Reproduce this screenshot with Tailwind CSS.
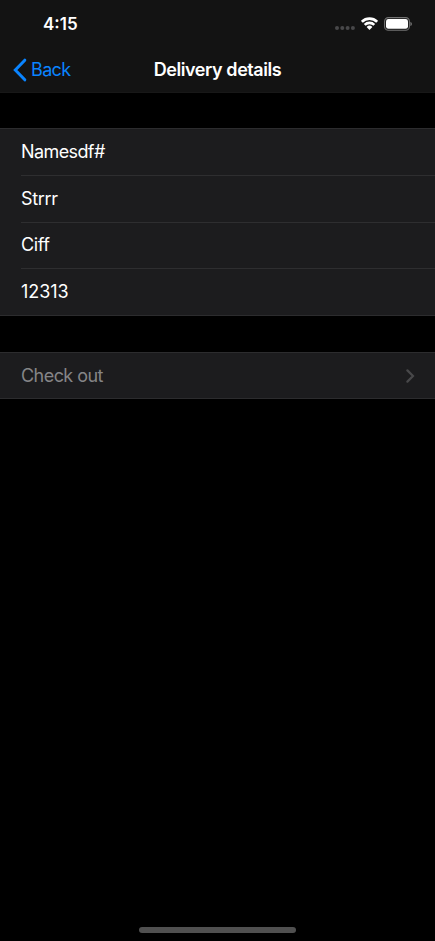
<!DOCTYPE html>
<html lang="en">
<head>
<meta charset="utf-8">
<title>Delivery details</title>
<script src="https://cdn.jsdelivr.net/npm/@tailwindcss/browser@4"></script>
</head>
<body class="bg-black">
<main class="flex h-[941px] w-[435px] flex-col overflow-hidden bg-black font-['Inter',sans-serif] text-[18px] leading-[22px] text-white">
  <header class="h-[93px] shrink-0 border-b border-[#181818] bg-[#131313]">
    <div class="flex h-[47px] items-center justify-between pr-[23px] pl-[43px]">
      <span class="text-[17px] font-semibold">4:15</span>
      <div class="flex items-center">
        <svg class="mt-[9px] mr-[6px]" width="20" height="4" viewBox="0 0 20 4" fill="#48484a"><circle cx="2" cy="2" r="2"/><circle cx="7.3" cy="2" r="2"/><circle cx="12.6" cy="2" r="2"/><circle cx="17.9" cy="2" r="2"/></svg>
        <svg class="mr-[6px]" width="17" height="13" viewBox="0 0 17 13" fill="none" stroke="#fff" stroke-width="2.6"><path d="M.9 4.8a10.8 10.8 0 0 1 15.2 0"/><path d="M3.7 7.9a6.8 6.8 0 0 1 9.6 0"/><path d="M8.5 12.9 5.6 10a4.1 4.1 0 0 1 5.8 0Z" fill="#fff" stroke="none"/></svg>
        <svg width="28" height="14" viewBox="0 0 28 14"><rect x=".6" y=".6" width="24.8" height="12.6" rx="3.8" fill="none" stroke="#737373" stroke-width="1.1"/><rect x="2" y="2" width="22" height="9.8" rx="2.4" fill="#fff"/><path d="M26.4 4.8c2 .8 2 3.4 0 4.2Z" fill="#737373"/></svg>
      </div>
    </div>
    <div class="grid h-[45px] grid-cols-[1fr_auto_1fr] items-center">
      <a class="flex items-center pl-[12px] text-[#0a84ff]">
        <svg class="mr-[4px]" width="15" height="24" viewBox="0 0 15 24" fill="none" stroke="#0a84ff" stroke-width="3" stroke-linecap="round" stroke-linejoin="miter"><path d="M12.8 2.2 3.3 12l9.5 9.8"/></svg>
        <span class="tracking-[-0.65px]">Back</span>
      </a>
      <h1 class="font-semibold tracking-[-0.43px]">Delivery details</h1>
    </div>
  </header>
  <section class="mt-[35px] h-[188px] shrink-0 border-y border-[#2c2c2e] bg-[#1c1c1e] pl-[21px] tracking-[-0.6px]">
    <div class="flex h-[47px] items-center border-b border-[#2e2e30]"><span>Namesdf#</span></div>
    <div class="flex h-[47px] items-center border-b border-[#2e2e30]"><span class="tracking-[-0.35px]">Strrr</span></div>
    <div class="flex h-[46px] items-center border-b border-[#2e2e30] pb-px"><span class="tracking-[-0.4px]">Ciff</span></div>
    <div class="flex h-[46px] items-center"><span class="tracking-[-0.05px]">12313</span></div>
  </section>
  <section class="mt-[36px] flex h-[47px] shrink-0 items-center justify-between border-y border-[#2c2c2e] bg-[#1c1c1e] pr-[20px] pl-[21px] text-[#858587]">
    <span class="tracking-[-0.55px]">Check out</span>
    <svg width="10" height="14" viewBox="0 0 10 14" fill="none" stroke="#48484a" stroke-width="2.2" stroke-linecap="round"><path d="m2.4 1.4 5.6 5.6-5.6 5.6"/></svg>
  </section>
  <div class="mx-auto mt-auto mb-[8px] h-[6px] w-[157px] rounded-full bg-[#505050]"></div>
</main>
</body>
</html>
